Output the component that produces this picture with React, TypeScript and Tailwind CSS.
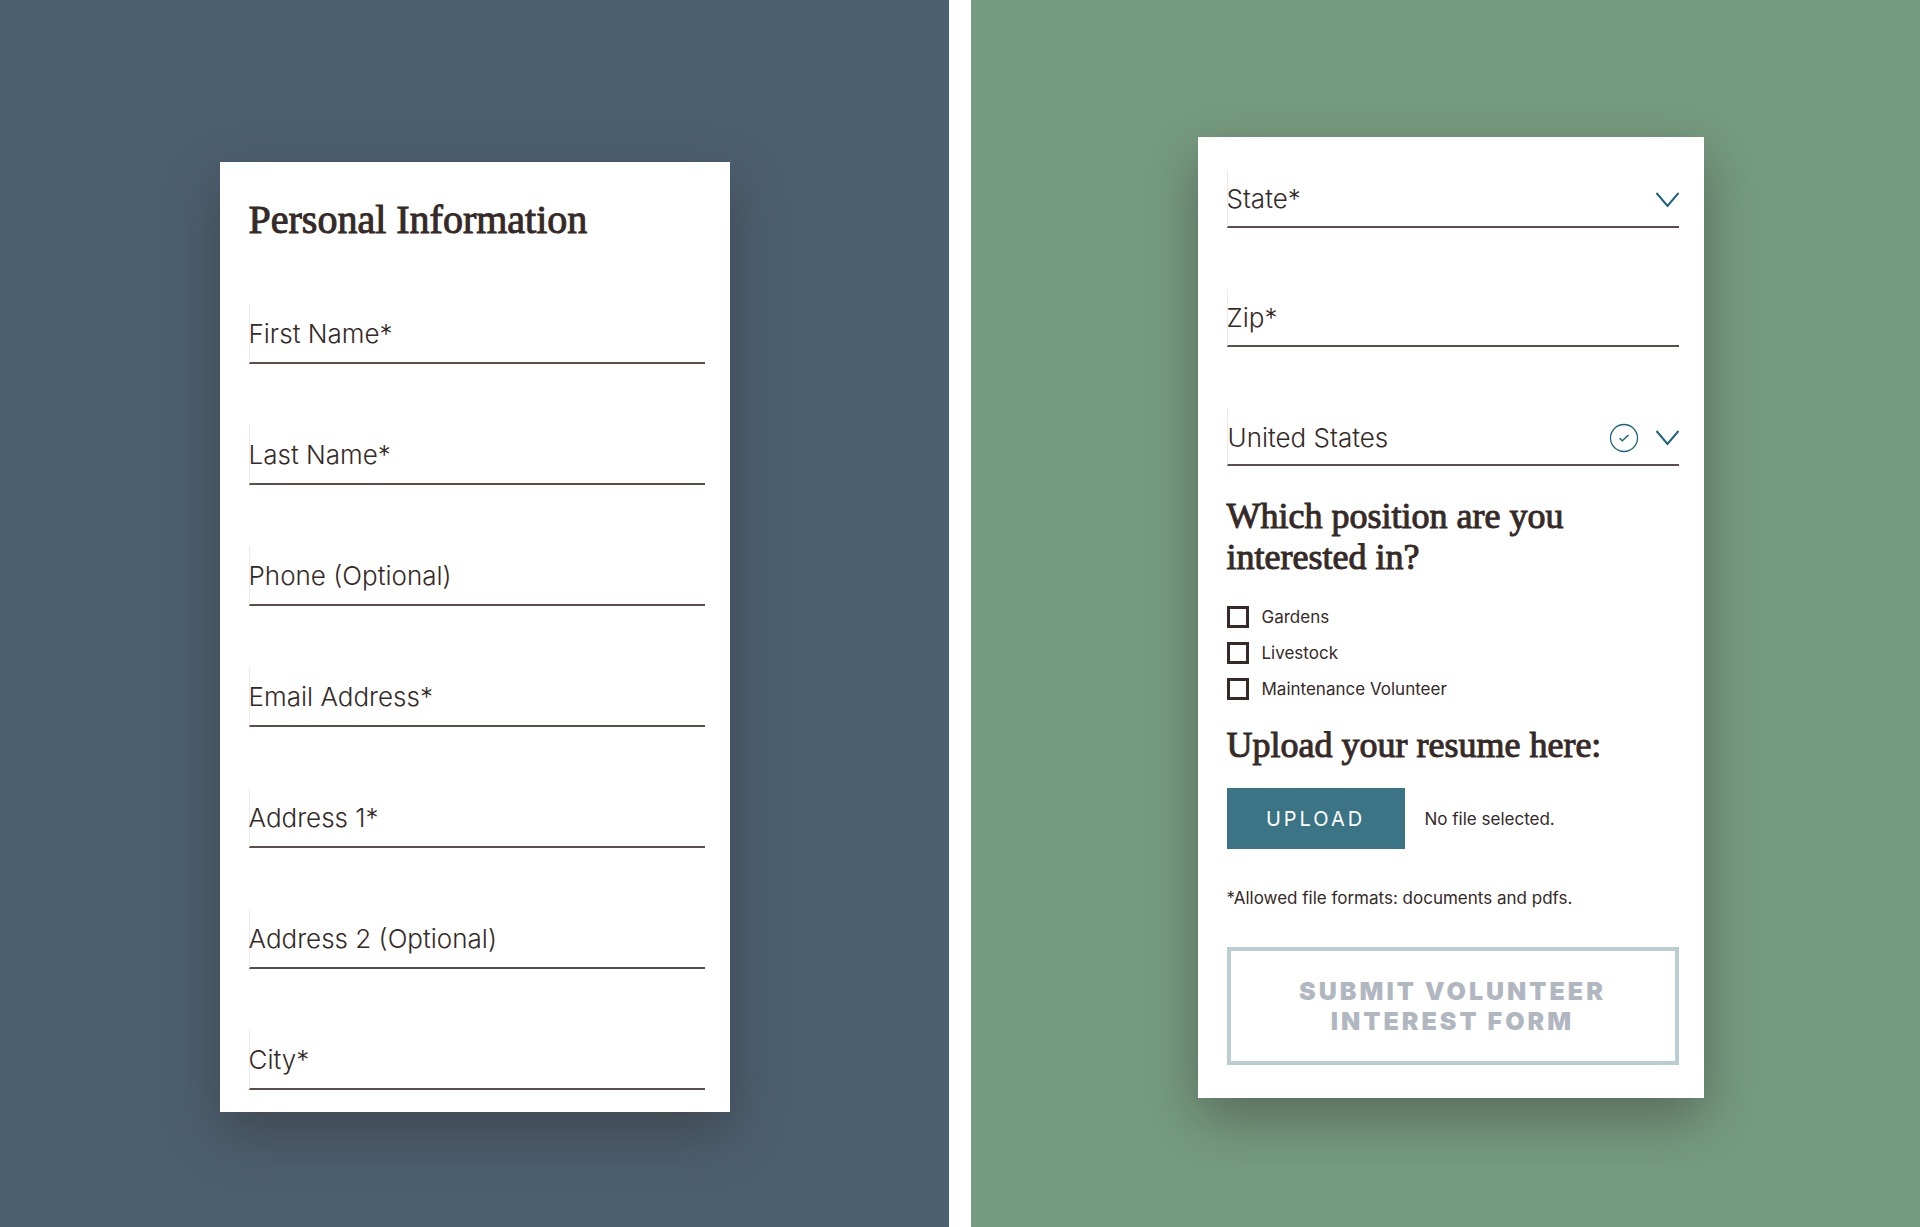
import React from "react";

const sans = "font-['Inter',sans-serif]";
const heading = "font-['Liberation_Serif',serif] text-[#352a27] [-webkit-text-stroke:1px_#352a27]";
const control =
  "peer block w-full rounded-none border-b-2 border-l border-b-[#5b4d4c] border-l-[#ebebeb] bg-transparent text-[26px] font-[350] text-[#352a27] outline-none";
const floatingLabel =
  "pointer-events-none absolute inset-x-0 inset-y-0 flex items-center text-[26px] leading-8 font-[350] text-[#352a27]";

const personalFields = [
  { id: "first-name", label: "First Name*", type: "text" },
  { id: "last-name", label: "Last Name*", type: "text" },
  { id: "phone", label: "Phone (Optional)", type: "tel" },
  { id: "email", label: "Email Address*", type: "email" },
  { id: "address-1", label: "Address 1*", type: "text" },
  { id: "address-2", label: "Address 2 (Optional)", type: "text" },
  { id: "city", label: "City*", type: "text" },
];

const positions = ["Gardens", "Livestock", "Maintenance Volunteer"];

function TextField({ id, label, type, size }: { id: string; label: string; type: string; size: string }) {
  return (
    <div className="relative">
      <input id={id} type={type} placeholder=" " className={`${control} ${size}`} />
      <label htmlFor={id} className={`${floatingLabel} peer-[:not(:placeholder-shown)]:hidden`}>
        {label}
      </label>
    </div>
  );
}

function Chevron() {
  return (
    <svg viewBox="0 0 24 16" className="h-4 w-6" fill="none" stroke="#1d6578" strokeWidth="2" aria-hidden="true">
      <path d="M1.5 1 L12.5 14 L23.5 1" />
    </svg>
  );
}

function CheckCircle() {
  return (
    <svg viewBox="0 0 30 30" className="h-[30px] w-[30px]" fill="none" stroke="#1d6578" aria-hidden="true">
      <circle cx="15" cy="15" r="13.5" strokeWidth="1.3" />
      <path d="M10.5 15.2 L13.3 17.8 L19.5 12" strokeWidth="1.5" />
    </svg>
  );
}

function SelectIcons({ valid }: { valid?: boolean }) {
  return (
    <span className="pointer-events-none absolute inset-y-0 right-0 flex items-center gap-4 pt-0.5">
      {valid && <CheckCircle />}
      <Chevron />
    </span>
  );
}

export default function App() {
  const [state, setState] = React.useState("");

  return (
    <main className={`${sans} grid min-h-screen grid-cols-2 gap-[22px] bg-white text-[#352a27]`}>
      <section className="flex items-start justify-center bg-[#4c5f70] pt-[162px] pb-16">
        <form className="w-full max-w-[510px] bg-white pt-[33px] pr-[25px] pb-[22px] pl-[29px] shadow-[0_20px_50px_rgba(48,40,36,0.42)]">
          <h1 className={`${heading} text-[40px] leading-[50px]`}>Personal Information</h1>
          <div className="mt-[59px] flex flex-col gap-[61px]">
            {personalFields.map((f) => (
              <TextField key={f.id} {...f} size="h-[60px]" />
            ))}
          </div>
        </form>
      </section>

      <section className="flex items-start justify-center bg-[#769b80] pt-[137px] pb-16 pl-[10px]">
        <form className="w-full max-w-[506px] bg-white pt-[33px] pr-[25px] pb-[33px] pl-[29px] shadow-[0_20px_50px_rgba(48,40,36,0.42)]">
          <div className="flex flex-col gap-[61px]">
            <div className="relative">
              <select
                id="state"
                value={state}
                onChange={(e) => setState(e.target.value)}
                className={`${control} h-[58px] appearance-none`}
              >
                <option value="" />
                <option>Maine</option>
                <option>New York</option>
                <option>Vermont</option>
              </select>
              {state === "" && (
                <label htmlFor="state" className={floatingLabel}>
                  State*
                </label>
              )}
              <SelectIcons />
            </div>
            <TextField id="zip" label="Zip*" type="text" size="h-[58px]" />
            <div className="relative">
              <select aria-label="Country" className={`${control} h-[58px] appearance-none pt-0.5`}>
                <option>United States</option>
              </select>
              <SelectIcons valid />
            </div>
          </div>

          <fieldset className="mt-[30px]">
            <legend className={`${heading} max-w-[360px] text-[36px] leading-[41px]`}>
              Which position are you interested in?
            </legend>
            <div className="mt-7 flex flex-col gap-[14px]">
              {positions.map((p) => (
                <label key={p} className="flex items-center gap-[13px] text-[17px] leading-[22px]">
                  <input
                    type="checkbox"
                    className="h-[22px] w-[22px] appearance-none border-[3px] border-[#352a27] checked:bg-[#1d6578]"
                  />
                  {p}
                </label>
              ))}
            </div>
          </fieldset>

          <h2 className={`${heading} mt-[25px] text-[36px] leading-[41px]`}>Upload your resume here:</h2>
          <div className="mt-[22px] flex items-center gap-5">
            <button type="button" className="h-[61px] w-[178px] bg-[#3b7485] text-xl tracking-[3px] text-white">
              UPLOAD
            </button>
            <span className="text-[17px] leading-6">No file selected.</span>
          </div>
          <p className="mt-[37px] text-[17px] leading-6">*Allowed file formats: documents and pdfs.</p>

          <button
            type="submit"
            className="mt-[37px] h-[118px] w-full border-4 border-[#b9cdd3] px-14 text-[25px] leading-[30px] font-black tracking-[3px] text-[#b1b7c0]"
          >
            SUBMIT VOLUNTEER INTEREST FORM
          </button>
        </form>
      </section>
    </main>
  );
}
